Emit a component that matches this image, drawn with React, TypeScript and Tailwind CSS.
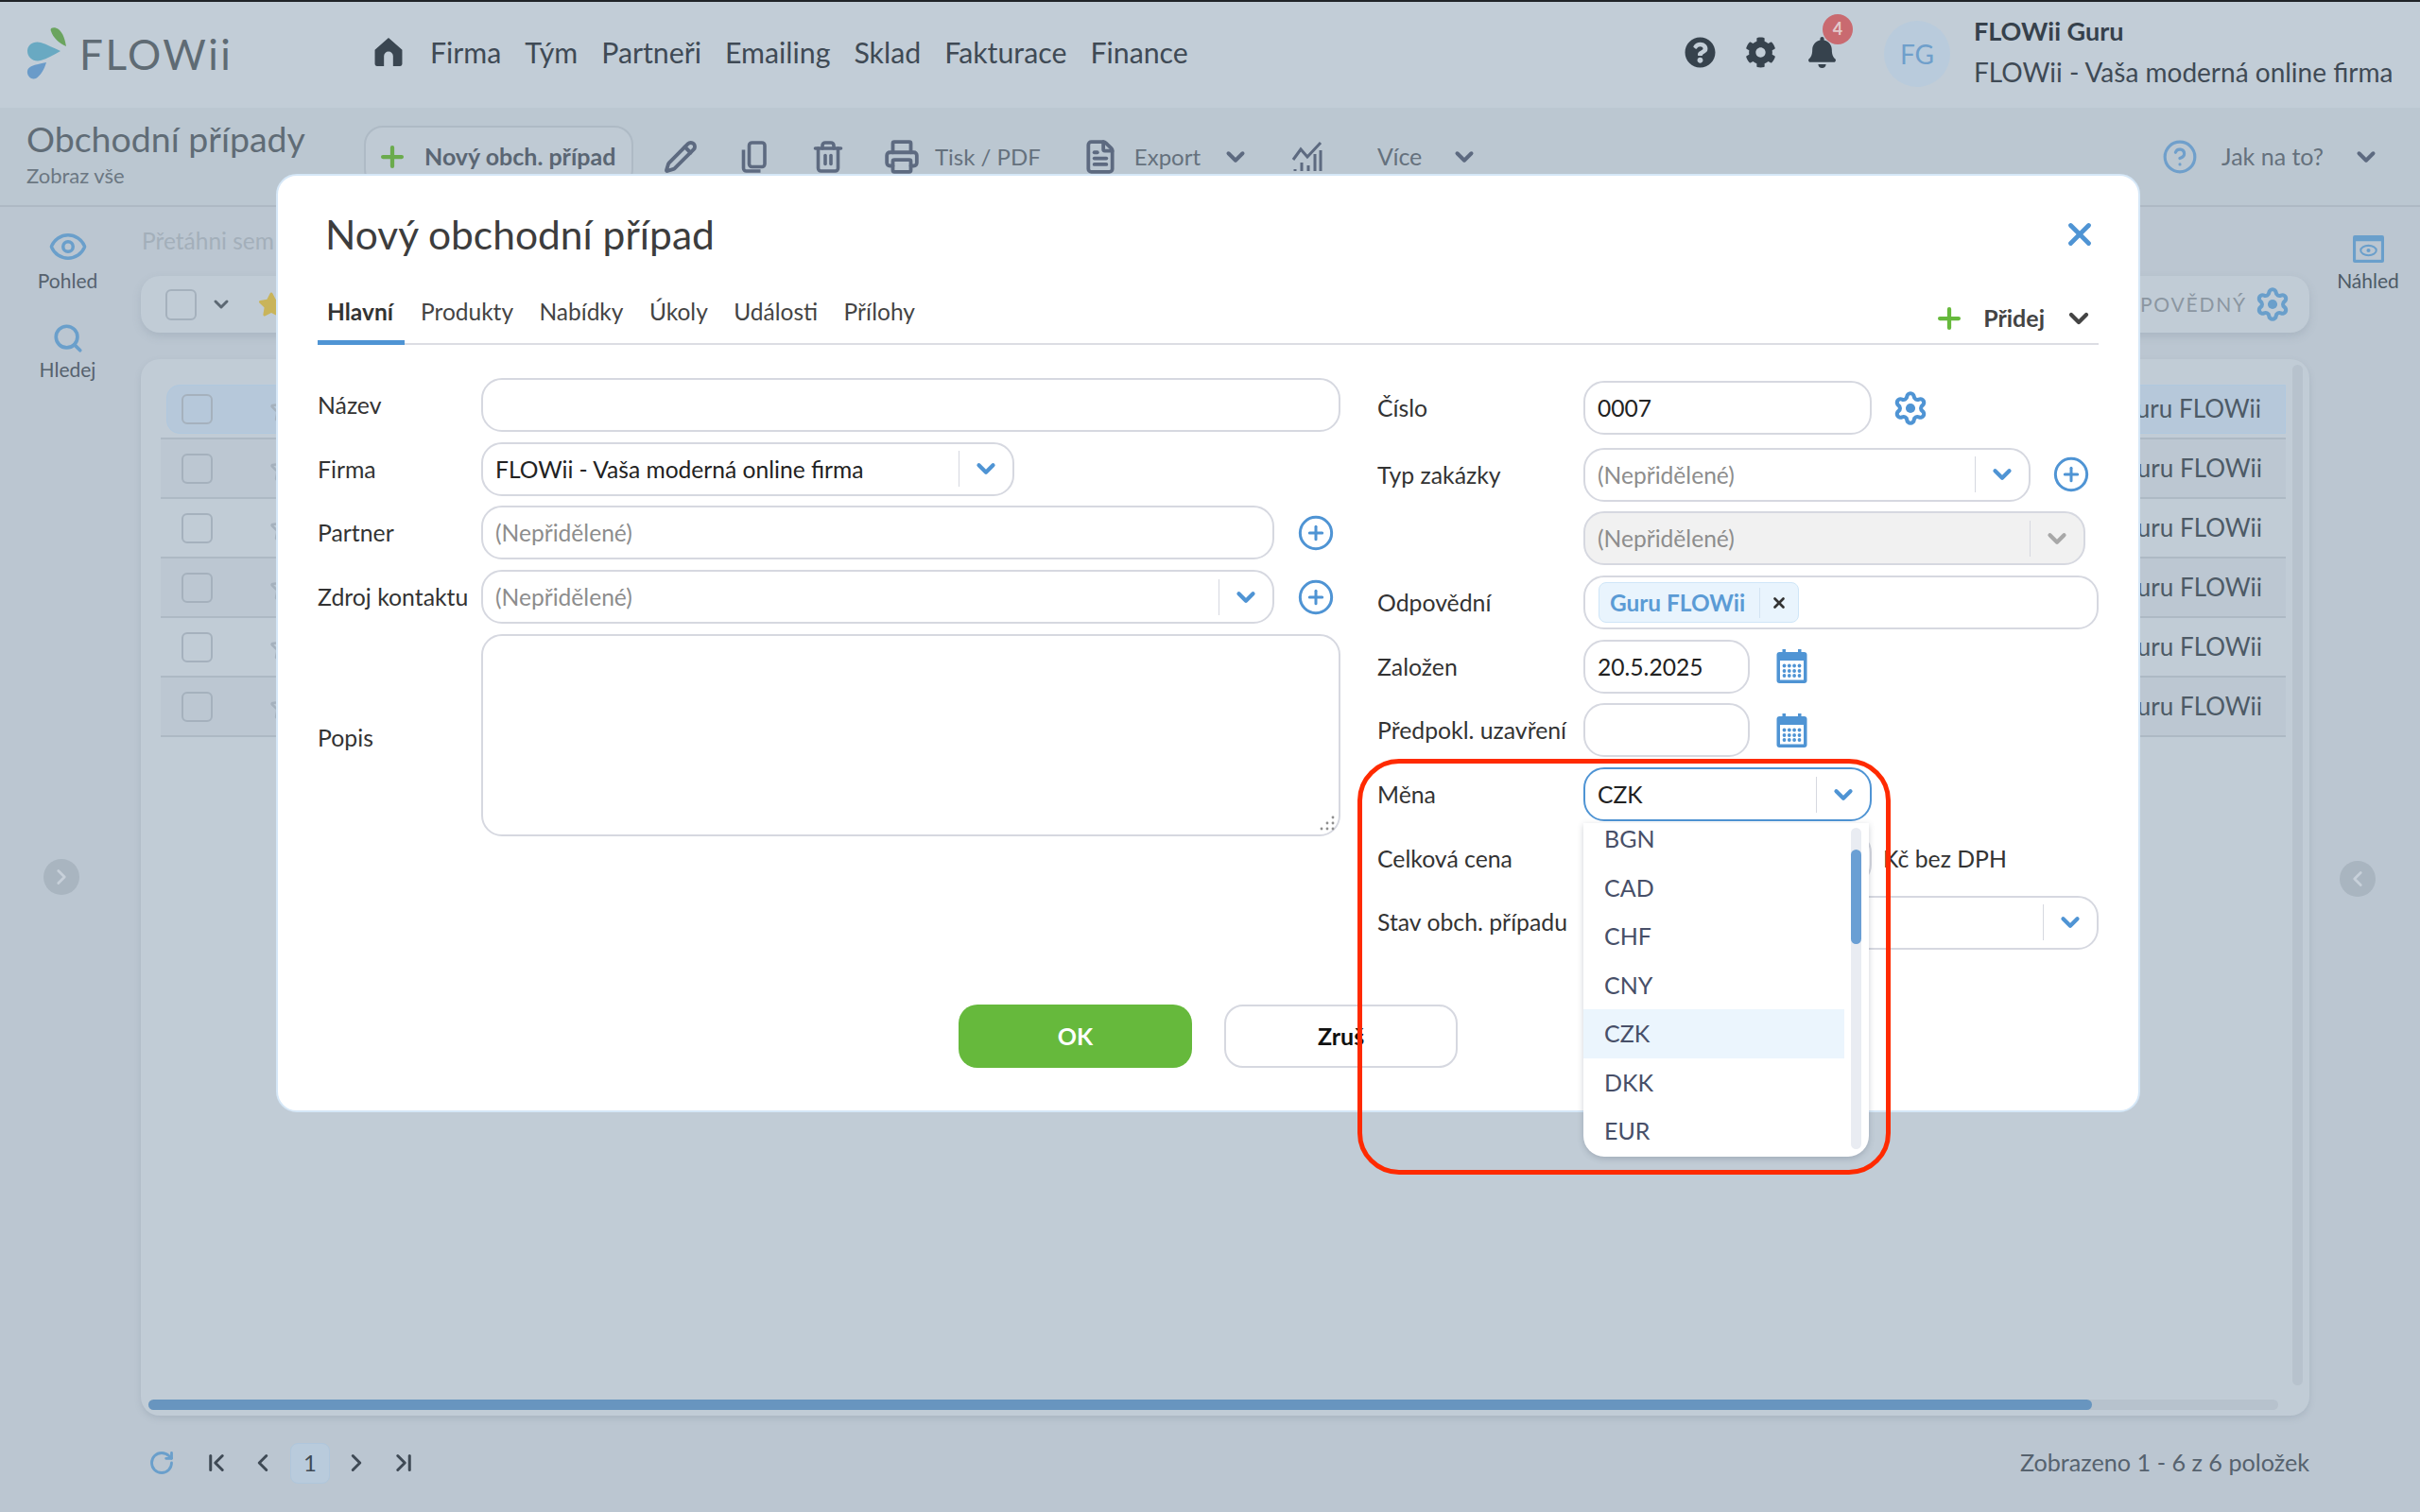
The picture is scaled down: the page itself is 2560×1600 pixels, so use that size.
import React from 'react';
import {
  ChevronDown, ChevronFirst, ChevronLast, ChevronLeft, ChevronRight, CircleHelp, CirclePlus, Eye,
  FileText, Pencil, Plus, Printer, RotateCw, Search, Star, Trash2, X,
} from 'lucide-react';
import { FaBell, FaCog, FaQuestionCircle, FaStar } from 'react-icons/fa';

const NAV = ['Firma', 'Tým', 'Partneři', 'Emailing', 'Sklad', 'Fakturace', 'Finance'];
const TABS = ['Produkty', 'Nabídky', 'Úkoly', 'Události', 'Přílohy'];
const CURRENCIES = ['BGN', 'CAD', 'CHF', 'CNY', 'CZK', 'DKK', 'EUR'];
const ROWS = [0, 1, 2, 3, 4, 5];

function Logo() {
  return (
    <div className="flex items-center">
      <svg width="44" height="56" viewBox="0 0 44 56">
        <path d="M26 4c-2-4 4-5 8-2 5 4 7 12 8 18-7-3-14-9-16-16z" fill="#6ba45f" />
        <path d="M1 25c0-7 7-11 14-9 7 2 14 6 21 9-7 4-14 8-21 10C8 37 1 32 1 25z" fill="#69a9c2" />
        <path d="M21 37c-2 7-6 14-11 17-5 2-10-3-9-8 1-5 6-6 20-9z" fill="#6a9bc9" />
      </svg>
      <span className="ml-[12px] text-[44px] leading-none tracking-[2.5px] text-[#5f6b74]">FLOWii</span>
    </div>
  );
}

function HomeIcon() {
  return (
    <svg viewBox="0 0 27 28" className="h-[30px] w-[30px] fill-[#3a4651]">
      <path d="M13.5 0 27 12v14a2 2 0 0 1-2 2h-7V18a4.5 4.5 0 0 0-9 0v10H2a2 2 0 0 1-2-2V12z" />
    </svg>
  );
}

function CopyIcon() {
  return (
    <svg viewBox="0 0 24 24" fill="none" stroke="#5d6a80" strokeWidth="2.4" className="h-[36px] w-[36px]">
      <rect x="9" y="2" width="11" height="17" rx="2" />
      <path d="M5 7v13a2 2 0 0 0 2 2h10" />
    </svg>
  );
}

function GearOutline({ className }: { className: string }) {
  return (
    <svg viewBox="0 0 24 24" fill="none" stroke="currentColor" strokeWidth="2.6" className={className}>
      <path d="M9.671 4.136a2.34 2.34 0 0 1 4.659 0 2.34 2.34 0 0 0 3.319 1.915 2.34 2.34 0 0 1 2.33 4.033 2.34 2.34 0 0 0 0 3.831 2.34 2.34 0 0 1-2.33 4.033 2.34 2.34 0 0 0-3.319 1.915 2.34 2.34 0 0 1-4.659 0 2.34 2.34 0 0 0-3.32-1.915 2.34 2.34 0 0 1-2.33-4.033 2.34 2.34 0 0 0 0-3.831A2.34 2.34 0 0 1 6.35 6.051a2.34 2.34 0 0 0 3.319-1.915" />
      <circle cx="12" cy="12" r="3.2" fill="currentColor" stroke="none" />
    </svg>
  );
}

function CalendarIcon() {
  return (
    <svg viewBox="0 0 32 36" className="h-[36px] w-[33px] text-[#4f94d4]">
      <rect x="6" y="0" width="3.5" height="6" fill="currentColor" />
      <rect x="22.5" y="0" width="3.5" height="6" fill="currentColor" />
      <rect x="0" y="3" width="32" height="33" rx="3" fill="currentColor" />
      <rect x="3.5" y="12" width="25" height="20.5" fill="#fff" />
      {[8, 13.3, 18.6, 24].map(x =>
        [17.5, 23, 28].map(y => <circle key={`${x}-${y}`} cx={x} cy={y} r="1.9" fill="currentColor" />),
      )}
    </svg>
  );
}

function ChartIcon() {
  return (
    <svg viewBox="0 0 34 34" fill="none" stroke="#5d6a80" strokeWidth="3" className="h-[34px] w-[34px]">
      <path d="M2 20 10 9l7 8L31 2" />
      <path d="M4 32v-2M11 32v-9M18 32v-6M25 32V14M31 32V10" />
    </svg>
  );
}

function Select({ value, muted, disabled, focused, className, children }: {
  value: string;
  muted?: boolean;
  disabled?: boolean;
  focused?: boolean;
  className: string;
  children?: React.ReactNode;
}) {
  const frame = focused ? 'border-[#4f94d4]' : 'border-[#d6d8e0]';
  const fill = disabled ? 'bg-[#f1f1f1]' : 'bg-white';
  return (
    <div className={`relative flex h-[57px] items-center rounded-[22px] border-2 ${frame} ${fill} ${className}`}>
      <span className={`flex-1 pl-[13px] pt-[2px] text-[24.6px] ${muted ? 'text-[#8d8d8d]' : 'text-[#222]'}`}>{value}</span>
      <span className="h-[38px] w-px bg-[#d6d8e0]" />
      <span className="flex w-[56px] justify-center">
        <ChevronDown size={30} strokeWidth={3.4} className={disabled ? 'text-[#a8a8a8]' : 'text-[#4f94d4]'} />
      </span>
      {children}
    </div>
  );
}

function TextInput({ value, placeholder, className }: { value?: string; placeholder?: string; className: string }) {
  return (
    <input
      readOnly
      defaultValue={value}
      placeholder={placeholder}
      className={`h-[57px] rounded-[22px] border-2 border-[#d6d8e0] bg-white pl-[13px] text-[24.6px] text-[#222] outline-none placeholder:text-[#8d8d8d] ${className}`}
    />
  );
}

function Label({ text, className }: { text: string; className: string }) {
  return <span className={`shrink-0 text-[24.8px] text-[#333] ${className}`}>{text}</span>;
}

function AddButton() {
  return <CirclePlus size={40} strokeWidth={1.8} className="text-[#4f94d4]" />;
}

function Modal() {
  return (
    <div className="absolute left-[292px] top-[184px] flex h-[993px] w-[1972px] flex-col rounded-[22px] border-2 border-[#d5e7f7] bg-white px-[42px]">
      <div className="flex items-center justify-between pl-[8px] pr-[2px] pt-[36px]">
        <h1 className="text-[42.5px] font-normal leading-[52px] text-[#3d3d3d]">Nový obchodní případ</h1>
        <X size={38} strokeWidth={3} className="mr-[-1px] text-[#4f94d4]" />
      </div>

      <div className="mt-[29px] flex h-[62px] items-start border-b-2 border-[#dcdde3]">
        <span className="flex h-[62px] w-[92px] justify-center border-b-[5px] border-[#4f94d4] pr-[2px] pt-[9px] text-[24.5px] font-bold text-[#333]">Hlavní</span>
        <div className="ml-[17px] flex gap-[27.5px] pt-[9px] text-[24.5px] text-[#444]">
          {TABS.map(t => <span key={t}>{t}</span>)}
        </div>
        <div className="ml-auto flex items-center pt-[15px]">
          <Plus size={34} strokeWidth={3} className="text-[#66b93c]" />
          <span className="ml-[19px] text-[25px] font-bold text-[#444]">Přidej</span>
          <ChevronDown size={32} strokeWidth={3.2} className="ml-[20px] mr-[5px] text-[#444]" />
        </div>
      </div>

      <div className="mt-[35px] flex gap-[39px]">
        <div className="flex w-[1082px] flex-col gap-[10.7px]">
          <div className="flex items-center">
            <Label text="Název" className="w-[173px]" />
            <TextInput className="flex-1" />
          </div>
          <div className="flex items-center">
            <Label text="Firma" className="w-[173px]" />
            <Select value="FLOWii - Vaša moderná online firma" className="w-[564px]" />
          </div>
          <div className="flex items-center">
            <Label text="Partner" className="w-[173px]" />
            <TextInput placeholder="(Nepřidělené)" className="w-[839px]" />
            <span className="ml-[24px] flex"><AddButton /></span>
          </div>
          <div className="flex items-center">
            <Label text="Zdroj kontaktu" className="w-[173px]" />
            <Select value="(Nepřidělené)" muted className="w-[839px]" />
            <span className="ml-[24px] flex"><AddButton /></span>
          </div>
          <div className="flex items-center">
            <Label text="Popis" className="mt-[6px] w-[173px]" />
            <div className="relative h-[214px] flex-1 rounded-[22px] border-2 border-[#d6d8e0]">
              <svg viewBox="0 0 18 18" className="absolute bottom-[3px] right-[3px] h-[18px] w-[18px] fill-[#8f8f8f]">
                <circle cx="15" cy="3" r="1.4" />
                <circle cx="9" cy="9" r="1.4" />
                <circle cx="15" cy="9" r="1.4" />
                <circle cx="3" cy="15" r="1.4" />
                <circle cx="9" cy="15" r="1.4" />
                <circle cx="15" cy="15" r="1.4" />
              </svg>
            </div>
          </div>
        </div>

        <div className="mt-[3px] flex flex-1 flex-col gap-[10.7px]">
          <div className="mb-[3px] flex items-center">
            <Label text="Číslo" className="w-[218px]" />
            <TextInput value="0007" className="w-[305px]" />
            <GearOutline className="ml-[22px] h-[38px] w-[38px] text-[#4f94d4]" />
          </div>
          <div className="flex items-center">
            <Label text="Typ zakázky" className="w-[218px]" />
            <Select value="(Nepřidělené)" muted className="w-[473px]" />
            <span className="ml-[23px] flex"><AddButton /></span>
          </div>
          <div className="flex items-center">
            <span className="w-[218px]" />
            <Select value="(Nepřidělené)" muted disabled className="w-[531px]" />
          </div>
          <div className="flex items-center">
            <Label text="Odpovědní" className="w-[218px]" />
            <div className="flex h-[57px] flex-1 items-center rounded-[22px] border-2 border-[#d6d8e0] pl-[14px]">
              <span className="flex h-[43px] items-center rounded-[8px] border border-[#cfe6f8] bg-[#e9f4fd] pl-[11px]">
                <span className="pt-[2px] text-[24.4px] font-bold text-[#5b9bd5]">Guru FLOWii</span>
                <span className="ml-[15px] h-[32px] w-px bg-[#d3e4f2]" />
                <X size={18} strokeWidth={3.6} className="mx-[11px] text-[#333]" />
              </span>
            </div>
          </div>
          <div className="flex items-center">
            <Label text="Založen" className="w-[218px]" />
            <TextInput value="20.5.2025" className="w-[176px]" />
            <span className="ml-[28px] flex"><CalendarIcon /></span>
          </div>
          <div className="flex items-center">
            <Label text="Předpokl. uzavření" className="w-[218px]" />
            <TextInput className="w-[176px]" />
            <span className="ml-[28px] flex"><CalendarIcon /></span>
          </div>
          <div className="flex items-center">
            <Label text="Měna" className="w-[218px]" />
            <Select value="CZK" focused className="z-10 w-[305px]">
              <div className="absolute left-[-2px] top-[57px] h-[353px] w-[302px] overflow-hidden rounded-b-[22px] bg-white shadow-[0_2px_6px_rgba(60,70,90,0.25)]">
                <div className="mt-[-9px] flex w-[276px] flex-col">
                  {CURRENCIES.map(c => (
                    <span
                      key={c}
                      className={`flex h-[51.5px] items-center pl-[22px] text-[25px] text-[#474f68] ${c === 'CZK' ? 'bg-[#ebf5fd]' : ''}`}
                    >
                      {c}
                    </span>
                  ))}
                </div>
                <div className="absolute bottom-[8px] right-[8px] top-[5px] w-[11px] rounded-full bg-[#e9ecf2]">
                  <div className="mt-[23px] h-[100px] rounded-full bg-[#6a9fd4]" />
                </div>
              </div>
            </Select>
          </div>
          <div className="flex items-center">
            <Label text="Celková cena" className="w-[218px]" />
            <TextInput className="w-[305px]" />
            <span className="ml-[12px] text-[24.8px] text-[#333]">Kč bez DPH</span>
          </div>
          <div className="flex items-center">
            <Label text="Stav obch. případu" className="w-[218px]" />
            <Select value="" className="flex-1" />
          </div>
        </div>
      </div>

      <div className="mt-auto mb-[45px] flex justify-center gap-[34px] text-[25px] font-bold">
        <button className="h-[67px] w-[247px] rounded-[20px] bg-[#66b93c] text-white">OK</button>
        <button className="h-[67px] w-[247px] rounded-[20px] border-2 border-[#d6d8e0] bg-white text-[#111]">Zruš</button>
      </div>
    </div>
  );
}

export default function App() {
  return (
    <div className="relative h-[1600px] w-[2560px] overflow-hidden bg-[#bbc6d1] [font-family:Lato,'Noto_Sans',sans-serif]">
      {/* Header */}
      <header className="flex h-[114px] items-center border-t-2 border-[#1f2328] bg-[#c2cdd7] pl-[28px]">
        <div className="mb-[2px] w-[368px]"><Logo /></div>
        <span className="mb-[6px] flex"><HomeIcon /></span>
        <nav className="mb-[5px] ml-[29px] flex gap-[25px] text-[30.3px] text-[#3f4a55]">
          {NAV.map(n => <span key={n}>{n}</span>)}
        </nav>
        <div className="ml-auto flex items-center">
          <div className="mb-[6px] flex items-center">
            <FaQuestionCircle size={33} className="text-[#36424d]" />
            <FaCog size={33} className="ml-[31px] text-[#36424d]" />
            <div className="relative ml-[32px]">
              <FaBell size={33} className="text-[#36424d]" />
              <span className="absolute left-[17px] top-[-24px] flex h-[32px] w-[32px] items-center justify-center rounded-full bg-[#c96a70] text-[18px] font-bold text-[#e3c9cc]">4</span>
            </div>
          </div>
          <div className="mb-[2px] ml-[49px] flex h-[70px] w-[70px] items-center justify-center rounded-full bg-[#b9cbdc] text-[28px] text-[#6f9fcb]">FG</div>
          <div className="mb-[6px] ml-[25px] w-[472px]">
            <div className="text-[27px] font-bold text-[#36414c]">FLOWii Guru</div>
            <div className="mt-[2px] text-[28px] text-[#3f4a55]">FLOWii - Vaša moderná online firma</div>
          </div>
        </div>
      </header>

      {/* Toolbar */}
      <div className="flex h-[105px] items-center border-b-2 border-[#aeb9c4] bg-[#bbc7d1] text-[#65717d]">
        <div className="w-[385px] pb-[4px] pl-[28px]">
          <div className="text-[37.5px] leading-[44px] text-[#606c76]">Obchodní případy</div>
          <div className="text-[22px] text-[#6b7782]">Zobraz vše</div>
        </div>
        <div className="flex h-[66px] w-[285px] items-center rounded-[20px] border-2 border-[#aebac5] bg-[#bfcad4] pl-[11px]">
          <Plus size={34} strokeWidth={3} className="text-[#6bab4d]" />
          <span className="ml-[17px] text-[25px] font-bold text-[#5a6673]">Nový obch. případ</span>
        </div>
        <Pencil size={36} strokeWidth={2.6} className="ml-[32px] text-[#5d6a80]" />
        <span className="ml-[41px] flex"><CopyIcon /></span>
        <Trash2 size={36} strokeWidth={2.4} className="ml-[43px] text-[#5d6a80]" />
        <Printer size={38} strokeWidth={2.4} className="ml-[41px] text-[#5d6a80]" />
        <span className="ml-[16px] text-[24px]">Tisk / PDF</span>
        <FileText size={38} strokeWidth={2.4} className="ml-[44px] text-[#5d6a80]" />
        <span className="ml-[17px] text-[24px]">Export</span>
        <ChevronDown size={30} strokeWidth={3.2} className="ml-[22px] text-[#5d6a80]" />
        <span className="ml-[44px] flex"><ChartIcon /></span>
        <span className="ml-[57px] text-[25px]">Více</span>
        <ChevronDown size={30} strokeWidth={3.2} className="ml-[30px] text-[#5d6a80]" />
        <CircleHelp size={38} strokeWidth={2} className="ml-auto text-[#6f9fcb]" />
        <span className="ml-[25px] text-[25px]">Jak na to?</span>
        <ChevronDown size={30} strokeWidth={3.2} className="ml-[30px] mr-[42px] text-[#5d6a80]" />
      </div>

      <div className="flex h-[1379px]">
        {/* Left rail */}
        <aside className="flex w-[149px] flex-col items-center pr-[6px] pt-[21px] text-[21px] text-[#56626e]">
          <Eye size={42} strokeWidth={2} className="text-[#6a9fcb]" />
          <span className="mt-[-1px]">Pohled</span>
          <Search size={34} strokeWidth={2.6} className="mt-[28px] text-[#6a9fcb]" />
          <span>Hledej</span>
          <span className="mr-[13px] mt-[503px] flex h-[38px] w-[38px] items-center justify-center rounded-full bg-[#a9b5c0]">
            <ChevronRight size={26} strokeWidth={2.6} className="text-[#c7d0d9]" />
          </span>
        </aside>

        {/* Center */}
        <main className="flex w-[2294px] flex-col">
          <div className="flex h-[73px] items-center pl-[1px] text-[24.5px] text-[#a3afba]">Přetáhni sem</div>
          <div className="flex h-[60px] items-center rounded-[20px] bg-[#c1ccd6] pl-[26px] pr-[20px] shadow-[0_4px_8px_rgba(120,135,150,0.25)]">
            <span className="h-[33px] w-[33px] rounded-[6px] border-2 border-[#a5b1bd]" />
            <ChevronDown size={24} strokeWidth={3} className="ml-[14px] text-[#5c6873]" />
            <FaStar size={28} className="ml-[27px] text-[#c9b45a]" />
            <span className="ml-auto text-[21px] tracking-[1.8px] text-[#8b96a1]">ODPOVĚDNÝ</span>
            <GearOutline className="ml-[8px] h-[38px] w-[38px] text-[#6a9fcb]" />
          </div>
          <div className="mt-[28px] flex h-[1118px] flex-col rounded-[20px] bg-[#c1ccd6] shadow-[0_3px_6px_rgba(120,135,150,0.25)]">
            <div className="flex flex-1 pl-[21px] pr-[7px] pt-[6px]">
              <div className="mt-[16px] w-[2248px]">
                {ROWS.map(r => (
                  <div
                    key={r}
                    className={`flex h-[63px] items-center border-b-2 border-[#adb9c4] ${r % 2 === 1 ? 'bg-[#bcc7d2]' : ''}`}
                  >
                    <div className={`flex flex-1 items-center pr-[25px] ${r === 0 ? 'ml-[6px] h-[52px] rounded-l-[14px] border border-[#b0c8df] bg-[#b6c8da]' : ''}`}>
                      <span className={`h-[32px] w-[33px] rounded-[6px] border-2 border-[#a5b1bd] ${r === 0 ? 'ml-[15px]' : 'ml-[22px]'}`} />
                      <Star size={30} className="ml-[60px] text-[#a5b1bd]" />
                      <span className="ml-auto text-[26px] text-[#4d5a66]">Guru FLOWii</span>
                    </div>
                  </div>
                ))}
              </div>
              <div className="ml-auto h-[1080px] w-[11px] rounded-full bg-[#b7c2cd]" />
            </div>
            <div className="mb-[6px] ml-[8px] mr-[33px] h-[11px] rounded-full bg-[#b7c2cd]">
              <div className="h-full w-[2056px] rounded-full bg-[#6895bf]" />
            </div>
          </div>
          {/* Pager */}
          <div className="flex flex-1 items-center pl-[8px] text-[#3f4a55]">
            <RotateCw size={28} strokeWidth={2.4} className="text-[#6a9fcb]" />
            <ChevronFirst size={30} strokeWidth={2.4} className="ml-[29px]" />
            <ChevronLeft size={30} strokeWidth={2.4} className="ml-[19px]" />
            <span className="ml-[14px] flex h-[43px] w-[42px] items-center justify-center rounded-[8px] border border-[#afc6dc] bg-[#b9cbdc] text-[24px]">1</span>
            <ChevronRight size={30} strokeWidth={2.4} className="ml-[13px]" />
            <ChevronLast size={30} strokeWidth={2.4} className="ml-[20px]" />
            <span className="ml-auto text-[25.2px] text-[#56626e]">Zobrazeno 1 - 6 z 6 položek</span>
          </div>
        </main>

        {/* Right rail */}
        <aside className="flex flex-1 flex-col items-center pl-[7px] pt-[28px] text-[21px] text-[#4d5a66]">
          <svg viewBox="0 0 32 28" className="h-[33px] w-[33px]">
            <rect width="32" height="28" rx="2" fill="#6a9fcb" />
            <rect x="3" y="6" width="26" height="19" fill="#bbc6d1" />
            <ellipse cx="16" cy="15.5" rx="8" ry="5" fill="none" stroke="#6a9fcb" strokeWidth="2" />
            <circle cx="16" cy="15.5" r="2" fill="#6a9fcb" />
          </svg>
          <span className="mt-[1px]">Náhled</span>
          <span className="mr-[23px] mt-[598px] flex h-[38px] w-[38px] items-center justify-center rounded-full bg-[#a9b5c0]">
            <ChevronLeft size={26} strokeWidth={2.6} className="text-[#c7d0d9]" />
          </span>
        </aside>
      </div>

      <Modal />

      {/* red annotation frame */}
      <div className="absolute left-[1436px] top-[803px] z-20 h-[440px] w-[564px] rounded-[44px] border-[5px] border-[#ff2a00]" />
    </div>
  );
}
